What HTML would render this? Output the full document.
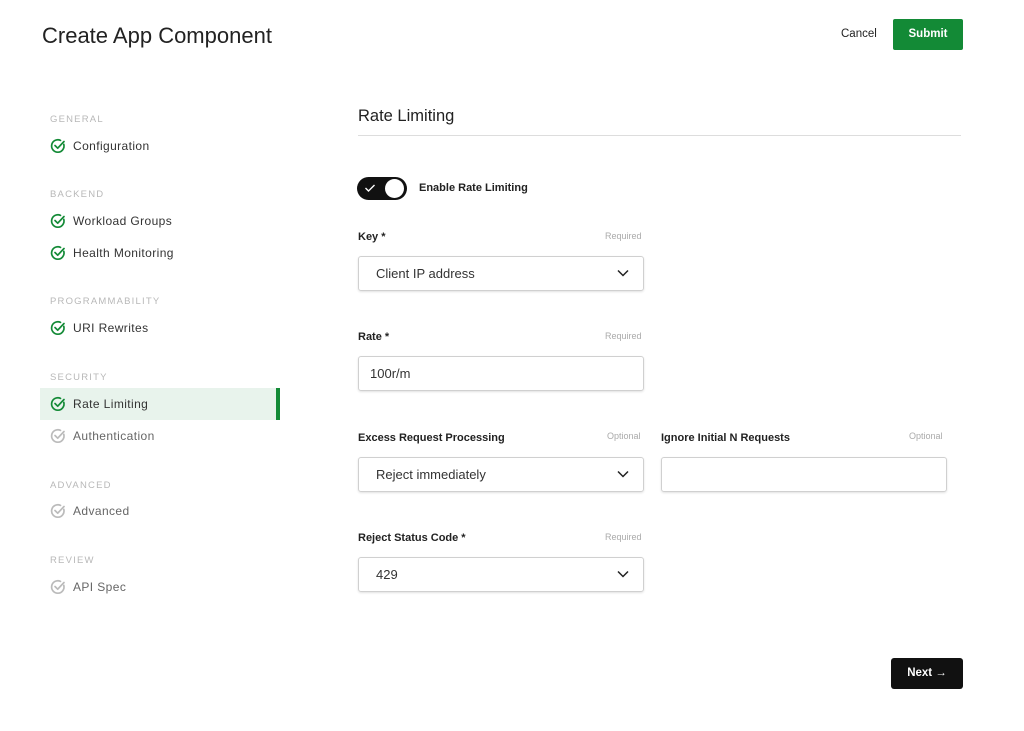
<!DOCTYPE html>
<html><head><style>
*{box-sizing:border-box;margin:0;padding:0}
body{width:1024px;height:731px;background:#fff;font-family:"Liberation Sans",sans-serif;color:#222;position:relative;overflow:hidden}
.a{position:absolute}
.sec{position:absolute;left:50px;font-size:9.5px;letter-spacing:1.2px;color:#b8b8b8}
.item{position:absolute;left:50px;font-size:12px;letter-spacing:.4px;color:#333;display:flex;align-items:center;gap:7px;height:16px}
.item.g{color:#666}
.lbl{position:absolute;font-size:11px;font-weight:bold;color:#222}
.req{position:absolute;font-size:9px;color:#aaa}
.box{position:absolute;border:1px solid #d0d0d0;border-radius:3px;box-shadow:0 1px 2px rgba(0,0,0,.12);height:35px;font-size:13px;color:#333;padding:0 17px;line-height:33px}
.chev{position:absolute;right:14px;top:12px}
</style></head><body>
<div class="a" style="left:42px;top:23px;font-size:22px;color:#222">Create App Component</div>
<div class="a" style="left:841px;top:28px;font-size:11.5px;color:#222">Cancel</div>
<div class="a" style="left:893px;top:19px;width:70px;height:31px;background:#138a36;border-radius:2px;color:#fff;font-size:11.5px;font-weight:bold;text-align:center;line-height:31px">Submit</div>

<div class="a" style="left:40px;top:388px;width:240px;height:32px;background:#e8f3ec"></div>
<div class="a" style="left:276px;top:388px;width:4px;height:32px;background:#138a36"></div>

<div class="sec" style="top:114px">GENERAL</div>
<div class="sec" style="top:189px">BACKEND</div>
<div class="sec" style="top:296px">PROGRAMMABILITY</div>
<div class="sec" style="top:372px">SECURITY</div>
<div class="sec" style="top:480px">ADVANCED</div>
<div class="sec" style="top:555px">REVIEW</div>

<svg width="0" height="0" style="position:absolute"><defs>
<symbol id="ck" viewBox="0 0 16 16"><path d="M13.8 6.4A6.2 6.2 0 1 1 10.5 2.4" fill="none" stroke="currentColor" stroke-width="1.7" stroke-linecap="round"/><path d="M5 7.5l2.7 2.7L14 3.5" fill="none" stroke="currentColor" stroke-width="1.7" stroke-linecap="round" stroke-linejoin="round"/></symbol>
<symbol id="ch" viewBox="0 0 12 8"><path d="M1 1.5l5 5 5-5" fill="none" stroke="#222" stroke-width="1.5"/></symbol>
</defs></svg>

<div class="item" style="top:138px"><svg width="16" height="16" style="color:#138a36"><use href="#ck"/></svg>Configuration</div>
<div class="item" style="top:213px"><svg width="16" height="16" style="color:#138a36"><use href="#ck"/></svg>Workload Groups</div>
<div class="item" style="top:245px"><svg width="16" height="16" style="color:#138a36"><use href="#ck"/></svg>Health Monitoring</div>
<div class="item" style="top:320px"><svg width="16" height="16" style="color:#138a36"><use href="#ck"/></svg>URI Rewrites</div>
<div class="item" style="top:396px"><svg width="16" height="16" style="color:#138a36"><use href="#ck"/></svg>Rate Limiting</div>
<div class="item g" style="top:428px"><svg width="16" height="16" style="color:#bbb"><use href="#ck"/></svg>Authentication</div>
<div class="item g" style="top:503px"><svg width="16" height="16" style="color:#bbb"><use href="#ck"/></svg>Advanced</div>
<div class="item g" style="top:579px"><svg width="16" height="16" style="color:#bbb"><use href="#ck"/></svg>API Spec</div>

<div class="a" style="left:358px;top:107px;font-size:16.5px;color:#222">Rate Limiting</div>
<div class="a" style="left:358px;top:135px;width:603px;height:1px;background:#ddd"></div>

<div class="a" style="left:357px;top:177px;width:50px;height:23px;background:#111;border-radius:12px"></div>
<div class="a" style="left:385px;top:179px;width:19px;height:19px;background:#fff;border-radius:50%"></div>
<svg class="a" style="left:364px;top:183px" width="12" height="10"><path d="M1.5 5l3 3 6-6" fill="none" stroke="#fff" stroke-width="1.4"/></svg>
<div class="lbl" style="left:419px;top:182px">Enable Rate Limiting</div>

<div class="lbl" style="left:358px;top:231px">Key *</div><div class="req" style="left:605px;top:231px">Required</div>
<div class="box" style="left:358px;top:256px;width:286px">Client IP address<svg class="chev" width="12" height="8"><use href="#ch"/></svg></div>

<div class="lbl" style="left:358px;top:331px">Rate *</div><div class="req" style="left:605px;top:331px">Required</div>
<div class="box" style="left:358px;top:356px;width:286px;padding-left:11px">100r/m</div>

<div class="lbl" style="left:358px;top:432px">Excess Request Processing</div><div class="req" style="left:607px;top:431px">Optional</div>
<div class="box" style="left:358px;top:457px;width:286px">Reject immediately<svg class="chev" width="12" height="8"><use href="#ch"/></svg></div>
<div class="lbl" style="left:661px;top:432px">Ignore Initial N Requests</div><div class="req" style="left:909px;top:431px">Optional</div>
<div class="box" style="left:661px;top:457px;width:286px"></div>

<div class="lbl" style="left:358px;top:532px">Reject Status Code *</div><div class="req" style="left:605px;top:532px">Required</div>
<div class="box" style="left:358px;top:557px;width:286px">429<svg class="chev" width="12" height="8"><use href="#ch"/></svg></div>

<div class="a" style="left:891px;top:658px;width:72px;height:31px;background:#111;border-radius:3px;color:#fff;font-size:11.5px;font-weight:bold;text-align:center;line-height:31px">Next &#8594;</div>
</body></html>
